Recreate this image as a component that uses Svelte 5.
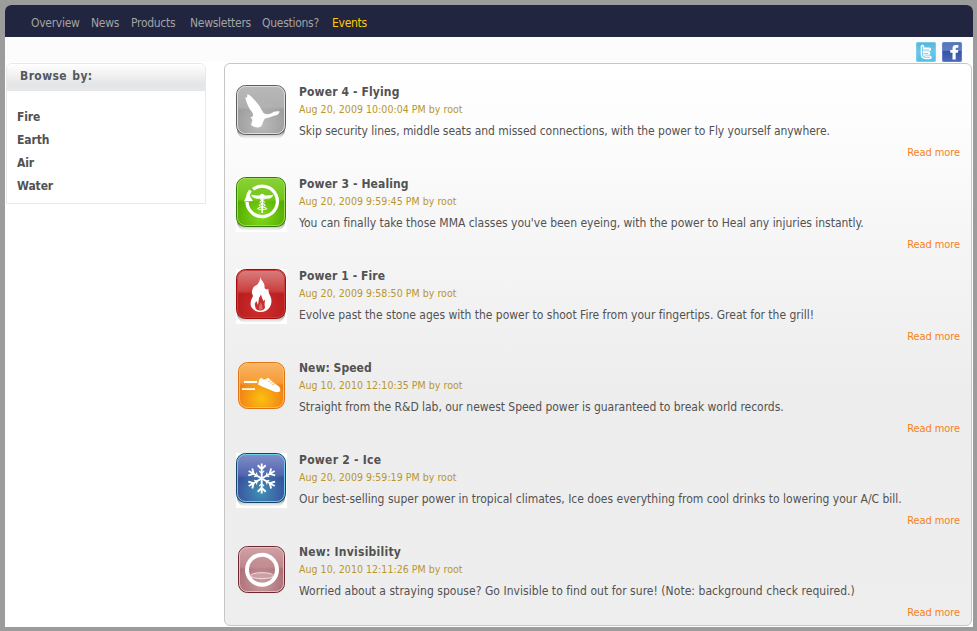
<script>
  const nav = [
    { label: 'Overview', w: 48 },
    { label: 'News', w: 28 },
    { label: 'Products', w: 47 },
    { label: 'Newsletters', w: 60 },
    { label: 'Questions?', w: 58 },
    { label: 'Events', w: 36 }
  ];
  const categories = ['Fire', 'Earth', 'Air', 'Water'];
  const items = [
    { icon: 'bird', track: [0.13, -0.047], colors: ['#b9b9b9', '#aeaeae', '#9d9d9d', '#bcbcbc'], edge: '#5c5c5c', rim: '#dedede', title: 'Power 4 - Flying', date: 'Aug 20, 2009 10:00:04 PM by root', text: 'Skip security lines, middle seats and missed connections, with the power to Fly yourself anywhere.' },
    { icon: 'heal', track: [0.12, -0.02], plate: true, colors: ['#8bd13a', '#72c517', '#55aa00', '#82dc1c'], edge: '#2f7d00', rim: '#9be04e', title: 'Power 3 - Healing', date: 'Aug 20, 2009 9:59:45 PM by root', text: "You can finally take those MMA classes you've been eyeing, with the power to Heal any injuries instantly." },
    { icon: 'fire', track: [0.09, -0.01], plate: true, colors: ['#d98080', '#cb4040', '#b81c1c', '#cf3030'], edge: '#a00c0c', rim: '#cf3a3a', title: 'Power 1 - Fire', date: 'Aug 20, 2009 9:58:50 PM by root', text: 'Evolve past the stone ages with the power to shoot Fire from your fingertips. Great for the grill!' },
    { icon: 'speed', track: [0.04, -0.035], small: true, colors: ['#f8b668', '#f79a35', '#f17f17', '#fbc010'], edge: '#e07410', rim: '#ffc23e', title: 'New: Speed', date: 'Aug 10, 2010 12:10:35 PM by root', text: 'Straight from the R&D lab, our newest Speed power is guaranteed to break world records.' },
    { icon: 'ice', track: [0.26, 0.003], plate: true, colors: ['#828fc9', '#5265ae', '#3a4f9f', '#3f91b4'], edge: '#0d4668', rim: '#6ed0ee', title: 'Power 2 - Ice', date: 'Aug 20, 2009 9:59:19 PM by root', text: 'Our best-selling super power in tropical climates, Ice does everything from cool drinks to lowering your A/C bill.' },
    { icon: 'ring', track: [0.24, 0.042], small: true, colors: ['#cfa3a7', '#be878c', '#ac6f75', '#c99ca0'], edge: '#6d2730', rim: '#e3bfc2', title: 'New: Invisibility', date: 'Aug 10, 2010 12:11:26 PM by root', text: 'Worried about a straying spouse? Go Invisible to find out for sure! (Note: background check required.)' }
  ];
</script>

<div class="frame">
  <div class="page">
    <nav>
      {#each nav as link, i}
        <a class:active={i === 5} style="width:{link.w}px">{link.label}</a>
      {/each}
    </nav>
    <div class="social">
      <svg width="20" height="20" viewBox="0 0 20 20">
        <defs><linearGradient id="tw" x2="0" y2="1"><stop offset="0" stop-color="#55b4d9" /><stop offset=".45" stop-color="#68c8e8" /><stop offset="1" stop-color="#52bde3" /></linearGradient></defs>
        <rect width="20" height="20" rx="2" fill="url(#tw)" /><rect x=".5" y=".5" width="19" height="19" rx="2" fill="none" stroke="#8bd3ec" opacity=".7" />
        <path d="M6.500 4.500v7.500q0 3.400 3.400 3.400h4M6.500 7.400h6.800M6.500 11.300h6" fill="none" stroke="#fff" stroke-width="3.600" stroke-linecap="round" />
        <path d="M6.500 4.800v7.200q0 3.200 3.400 3.200h3.800M6.800 8h6M8 11.600h4" fill="none" stroke="#7fcfea" stroke-width="1.100" stroke-linecap="round" />
      </svg>
      <svg width="20" height="20" viewBox="0 0 20 20">
        <defs><linearGradient id="fb" x2="0" y2="1"><stop offset="0" stop-color="#5575bb" /><stop offset=".42" stop-color="#5e7dc2" /><stop offset=".46" stop-color="#3552a3" /><stop offset="1" stop-color="#4b69bc" /></linearGradient></defs>
        <rect width="20" height="20" rx="2" fill="url(#fb)" /><rect x=".5" y=".5" width="19" height="19" rx="2" fill="none" stroke="#6c88c8" opacity=".7" />
        <path d="M10.500 17.500v-6.700H8.300V7.900h2.200V6.400q0-3.400 3.400-3.400h2.400v2.800h-1.600q-1 0-1 1v1.100h2.600l-.4 2.900h-2.200v6.700z" fill="#fff" />
      </svg>
    </div>
    <div class="columns">
      <aside>
        <h2>Browse by:</h2>
        <ul>
          {#each categories as c}<li>{c}</li>{/each}
        </ul>
      </aside>
      <main>
        {#each items as item}
          {@const x = item.small ? 13.5 : 11.5}
          {@const y = item.small ? 11.5 : 10.5}
          {@const s = item.small ? 46 : 49}
          <article>
            <svg class="icon" width="52" height="57" viewBox="10 8 52 57">
              <defs>
                <linearGradient id="g-{item.icon}" x2="0" y2="1">
                  <stop offset="0" stop-color={item.colors[0]} /><stop offset=".44" stop-color={item.colors[1]} /><stop offset=".5" stop-color={item.colors[2]} /><stop offset="1" stop-color={item.colors[2]} />
                </linearGradient>
                <radialGradient id="r-{item.icon}" cx=".5" cy=".8" r=".55">
                  <stop offset="0" stop-color={item.colors[3]} /><stop offset="1" stop-color={item.colors[3]} stop-opacity="0" />
                </radialGradient>
                <linearGradient id="s-{item.icon}" x2="0" y2="1"><stop offset=".85" stop-color="#555" stop-opacity=".65" /><stop offset="1" stop-color="#999" stop-opacity="0" /></linearGradient>
              </defs>
              {#if item.plate}<rect x="11" y="10" width="51" height="55" fill="#fff" />{/if}
              <rect x={x + 0.5} y="14" width={s - 1} height={item.small ? 46 : 50} rx="9" fill="url(#s-{item.icon})" opacity={item.small ? 0.35 : 1} />
              <rect {x} {y} width={s} height={s} rx="9" fill="url(#g-{item.icon})" stroke={item.edge} />
              <rect x={x + 1} y={y + 1} width={s - 2} height={s - 2} rx="8" fill="url(#r-{item.icon})" stroke={item.rim} />
              {#if item.icon === 'bird'}
                <path d="M22.5 19C25 20 29 24 32 28C35 31 36 34 38.5 38C41 40 44 39.5 47 38C49 36 52 36.5 54.5 36.3C54.5 38.5 53 40 50 40.5C47 41.5 43 43 40 43.5C38 45.5 38 49 36 51.5C33 53.5 28.5 52 26 50L27.5 45L25.5 42C28 42.5 29 40 27 37C24 34 22 29 20 22L22 23Z" fill="#fff" />
              {:else if item.icon === 'heal'}
                <path d="M28 22.300A15.200 15.200 0 1 1 22 35" fill="none" stroke="#fff" stroke-width="3.300" />
                <path d="M25.500 23.600A15.200 15.200 0 0 0 22.600 30" fill="none" stroke="#fff" stroke-width="3.300" />
                <path d="M19 34.500L23 26L28 34Z" fill="#fff" />
                <path d="M26 27.800q5 .8 8.500.6 1.300-1.600 2.700-1.600t2.700 1.600q3.500.2 8.500-.6-1.500 3.900-6.400 3.900h-9.500q-5 0-6.500-3.900" fill="#fff" />
                <path d="M37.200 28v18" stroke="#fff" stroke-width="1.500" />
                <path d="M35 32.500q4.500 1.300 4.500 2.600t-4 2.300 3.400 2.900-3 2.200M39.400 32.500q-4.500 1.300-4.500 2.600t4 2.300-3.400 2.900 3 2.200" fill="none" stroke="#fff" stroke-width="1" />
              {:else if item.icon === 'fire'}
                <path d="M35.500 18C35.500 22 40.500 23 39.500 29Q41.500 31.500 43.300 29.500Q43 33 45.500 37.500C48 43 45.500 50 40.500 52C36 54 30 53 27 49C24 45 26.500 40 28 37Q25.500 32 29 27.500Q33 26 34.500 22Z" fill="#fff" />
                <path d="M29.700 45L31.300 42L33 46L34 39L36 35.500L37 39L38.500 42L40 40.500L39.500 46Q41 49 38 51Q32 52.700 30.500 49Z" fill="#c82f2f" />
                <path d="M34 50.500q-1-3 2-7 2 5 1.500 7" fill="#fff" opacity=".3" />
              {:else if item.icon === 'speed'}
                <path d="M19 30h13v1.900H19zM17 37.200h13v1.900H17z" fill="#fff" />
                <path d="M34.500 28L36.500 26.700Q38.500 29.500 41 28.200L43 26.800L49 32L54 35.500Q55.500 37 55.300 40Q54 41.800 49.500 40.800L42.500 37.700Q36 35.500 33 33.600Z" fill="#fff" />
                <path d="M43 30.700l2.500-1M45 32.300l2.500-1M47 34l2.300-1" stroke="#f6a53d" stroke-width=".7" />
              {:else if item.icon === 'ice'}
                {#each [0, 60, 120, 180, 240, 300] as a}
                  <path transform="rotate({a} 36.700 35.500)" d="M36.700 35.500V20.500M32.700 22.300l4 3.900 4-3.900" fill="none" stroke="#fff" stroke-width="1.900" />
                  <path transform="rotate({a} 36.700 35.500)" d="M34.300 28l2.400 2.300 2.400-2.300" fill="none" stroke="#fff" stroke-width="1.100" />
                {/each}
              {:else}
                <circle cx="37" cy="34.800" r="15" fill="none" stroke="#fff" stroke-width="4" />
                <ellipse cx="37" cy="40.700" rx="11.500" ry="3" fill="#dbbfc2" fill-opacity=".4" stroke="#f6e8e9" stroke-width=".9" />
              {/if}
            </svg>
            <div class="copy">
              <h3 style="letter-spacing:{item.track[0]}px">{item.title}</h3>
              <p class="date">{item.date}</p>
              <p class="text" style="letter-spacing:{item.track[1]}px">{item.text}</p>
              <a class="more">Read more</a>
            </div>
          </article>
        {/each}
      </main>
    </div>
  </div>
</div>

<style>
  * { box-sizing: border-box; }
  :global(body) { background: #9c9c9c; }
  .frame {
    width: 977px; height: 631px; padding: 5px 4px 4px 5px; background: #9c9c9c; overflow: hidden;
    font-family: "DejaVu Sans Condensed", "DejaVu Sans", sans-serif; font-stretch: condensed; font-size: 12px; color: #525252;
  }
  .page { height: 622px; background: #fff; border-radius: 6px 6px 0 0; overflow: hidden; }
  nav { display: flex; gap: 12px; height: 32px; padding: 1px 0 0 26px; line-height: 35px; background: #21253f; color: #a3a3a3; letter-spacing: -0.28px; }
  nav a { white-space: nowrap; }
  nav a.active { color: #fc0; }
  .social { display: flex; justify-content: flex-end; gap: 6px; height: 25px; padding: 5px 11px 0 0; background: #fcfcfc; }
  .columns { display: flex; padding: 1px 1px 0; justify-content: space-between; }
  aside { width: 200px; height: 141px; border: 1px solid #e9e9e9; border-radius: 6px 6px 0 0; background: #fff; overflow: hidden; }
  h2 { margin: 0; height: 27px; padding-left: 13px; line-height: 25px; font-size: 12px; letter-spacing: 0.4px; word-spacing: 1px; color: #55585c; background: linear-gradient(#fff, #e4e5e6 75%, #e6e7e8); }
  ul { list-style: none; margin: 0; padding: 15px 0 0 10px; font-weight: bold; letter-spacing: -0.1px; }
  li { height: 23px; line-height: 23px; }
  main { width: 748px; height: 563px; padding: 8px 11px 0 10px; border: 1px solid #c6c6c6; border-radius: 6px; background: linear-gradient(#fff, #fdfdfd 10%, #f8f8f8 25%, #f2f2f2 42%, #ededed 60%, #eee); }
  article { display: flex; height: 92px; padding-top: 11px; }
  .icon { flex: none; }
  .copy { flex: 1; padding: 1px 0 0 12px; display: flex; flex-direction: column; white-space: nowrap; }
  h3, p { margin: 0; font-size: 12px; line-height: 17px; }
  .date { font-size: 10.5px; letter-spacing: 0.04px; color: #b8962e; line-height: 16px; }
  .text { margin-top: 6px; }
  .more { margin-top: 4px; align-self: flex-end; line-height: 17px; font-size: 11px; color: #f58220; letter-spacing: -0.08px; }
</style>
